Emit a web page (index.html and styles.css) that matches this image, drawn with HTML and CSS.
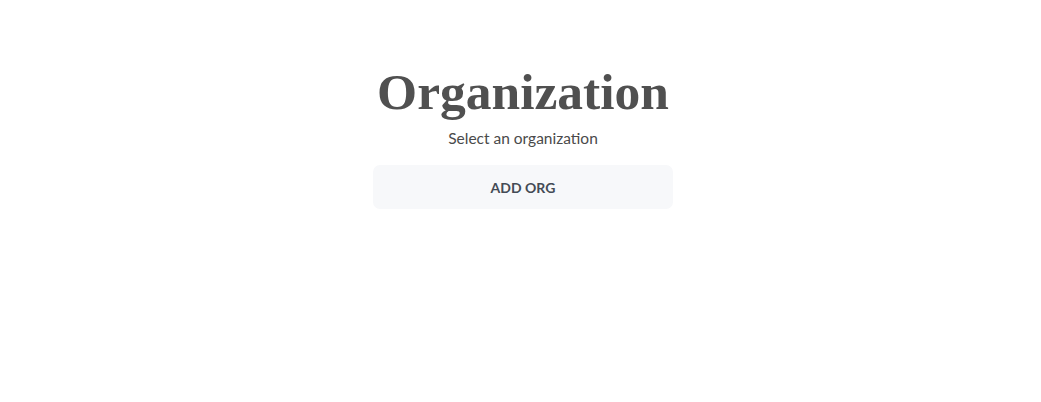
FILE: index.html
```html
<!DOCTYPE html>
<html lang="en">
<head>
<meta charset="utf-8">
<title>Organization</title>
<link rel="stylesheet" href="styles.css">
</head>
<body>
<main class="page">
  <section class="org-select">
    <h1 class="title">Organization</h1>
    <p class="subtitle">Select an organization</p>
    <button class="add-btn" type="button">ADD ORG</button>
  </section>
</main>
</body>
</html>
```
FILE: styles.css
```css
html, body {
  margin: 0;
  padding: 0;
  background: #ffffff;
}
.page {
  display: flex;
  justify-content: center;
  padding: 64px 0 0 5px;
}
.org-select {
  display: flex;
  flex-direction: column;
  align-items: center;
  width: 300px;
}
.title {
  margin: 0;
  font-family: "Liberation Serif", serif;
  font-weight: 700;
  font-size: 51.5px;
  line-height: 56px;
  color: #505050;
  letter-spacing: 0;
}
.subtitle {
  margin: 8px 0 0;
  font-family: Lato, "Noto Sans", sans-serif;
  font-size: 15.5px;
  line-height: 20px;
  color: #4a4a4a;
}
.add-btn {
  margin-top: 17px;
  width: 300px;
  height: 44px;
  border: none;
  border-radius: 7px;
  background: #f7f8fa;
  font-family: Lato, "Noto Sans", sans-serif;
  font-weight: 700;
  font-size: 14px;
  color: #444b55;
  cursor: pointer;
}
```
